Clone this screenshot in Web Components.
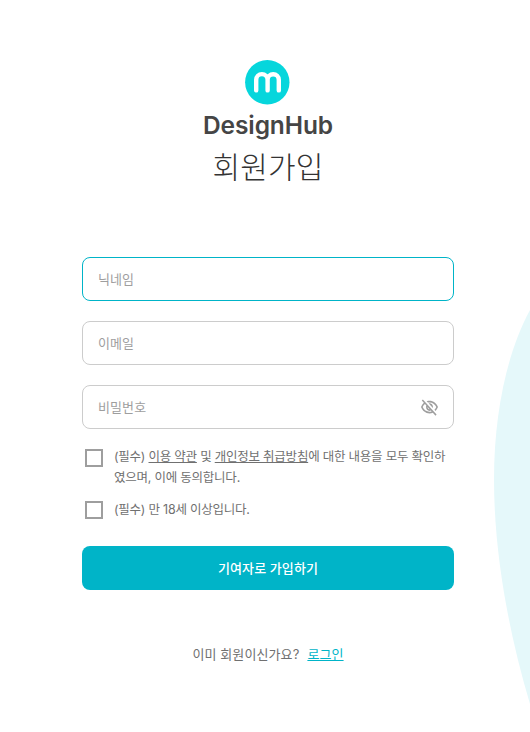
<!DOCTYPE html>
<html lang="ko">
<head>
<meta charset="UTF-8">
<title>DesignHub 회원가입</title>
<style>
  body {
    margin: 0;
    background: #fff;
    font-family: Inter, "Noto Sans CJK KR", "Noto Sans", sans-serif;
    font-size: 13px;
    letter-spacing: 0.1px;
    color: #707070;
  }
</style>
</head>
<body>
<signup-page>
  <brand-header slot="header" name="DesignHub">회원가입</brand-header>
  <text-field label="닉네임" active></text-field>
  <text-field label="이메일"></text-field>
  <text-field label="비밀번호" password></text-field>
  <agree-check style="margin-top: -4px"><span>(필수) <u>이용 약관</u> 및 <u>개인정보 취급방침</u>에 대한 내용을 모두 확인하<br>였으며, 이에 동의합니다.</span></agree-check>
  <agree-check style="margin-top: -11px; --text-top: 2px">(필수) 만 18세 이상입니다.</agree-check>
  <submit-button>기여자로 가입하기</submit-button>
  <login-prompt slot="footer" link="로그인">이미 회원이신가요?</login-prompt>
</signup-page>

<script>
class SignupPage extends HTMLElement {
    constructor() {
        super();
        this.attachShadow({ mode: 'open' });
        this.shadowRoot.innerHTML = `
      <style>
        :host {
          display: block;
          position: relative;
          box-sizing: border-box;
          width: 530px;
          height: 732px;
          padding: 60px 76px 0 82px;
          overflow: hidden;
        }

        .blob {
          position: absolute;
          top: 0;
          right: 0;
          width: 40px;
          height: 732px;
        }

        main {
          position: relative;
          display: flex;
          flex-direction: column;
        }

        form {
          display: flex;
          flex-direction: column;
          gap: 20px;
          height: 333px;
          margin: 0;
        }
      </style>

      <svg class="blob" viewBox="490 0 40 732">
        <path d="M530 310C507 352 494 414 494 479C494 552 508 630 530 704Z" fill="#e5f8fa"/>
      </svg>
      <main>
        <slot name="header"></slot>
        <form><slot></slot></form>
        <slot name="footer"></slot>
      </main>
    `;
    }
}

class BrandHeader extends HTMLElement {
    connectedCallback() {
        const name = this.getAttribute('name') || '';

        this.attachShadow({ mode: 'open' });
        this.shadowRoot.innerHTML = `
      <style>
        :host {
          display: flex;
          flex-direction: column;
          align-items: center;
          height: 197px;
        }

        svg {
          display: block;
          width: 45px;
          height: 45px;
          margin-right: 1px;
        }

        .name {
          height: 38px;
          font: 600 24.5px/40px Inter, sans-serif;
          letter-spacing: -0.1px;
          color: #454545;
          white-space: nowrap;
        }

        h1 {
          margin: 0;
          font-family: "Noto Sans CJK KR", sans-serif;
          font-size: 30px;
          font-weight: 300;
          line-height: 44px;
          color: #333;
        }
      </style>

      <svg viewBox="0 0 45 45" fill="none">
        <circle cx="22.3" cy="22.3" r="22.2" fill="#06d6dc"/>
        <path d="M11.2 30.4V19.8a5.7 5.7 0 0 1 11.4 0V30.4M22.6 19.8a5.6 5.6 0 0 1 11.2 0V30.4" stroke="#fff" stroke-width="4.4" stroke-linecap="round"/>
      </svg>
      <div class="name">${name}</div>
      <h1><slot></slot></h1>
    `;
    }
}

class TextField extends HTMLElement {
    connectedCallback() {
        const label = this.getAttribute('label') || '';
        const eye = this.hasAttribute('password') ? `
      <svg viewBox="1 2 22 20" preserveAspectRatio="none" fill="#9e9e9e">
        <path d="M12 6c3.79 0 7.17 2.13 8.82 5.5-.59 1.22-1.42 2.27-2.41 3.12l1.41 1.41c1.39-1.23 2.49-2.77 3.18-4.53C21.27 7.11 17 4 12 4c-1.27 0-2.49.2-3.64.57l1.65 1.65C10.66 6.09 11.32 6 12 6zm-1.07 1.14L13 9.21c.57.25 1.03.71 1.28 1.28l2.07 2.07c.08-.34.14-.7.14-1.07C16.5 9.01 14.48 7 12 7c-.37 0-.72.05-1.07.14zM2.01 3.87l2.68 2.68C3.06 7.83 1.77 9.53 1 11.5 2.73 15.89 7 19 12 19c1.52 0 2.98-.29 4.32-.82l3.42 3.42 1.41-1.41L3.42 2.45 2.01 3.87zm7.5 7.5l2.61 2.61c-.04.01-.08.02-.12.02-1.38 0-2.5-1.12-2.5-2.5 0-.05.01-.08.01-.13zm-3.4-3.4l1.75 1.75c-.23.55-.36 1.15-.36 1.78 0 2.48 2.02 4.5 4.5 4.5.63 0 1.23-.13 1.77-.36l.98.98c-.88.24-1.8.38-2.75.38-3.79 0-7.17-2.13-8.82-5.5.7-1.43 1.72-2.61 2.93-3.53z"/>
      </svg>` : '';

        this.attachShadow({ mode: 'open' });
        this.shadowRoot.innerHTML = `
      <style>
        :host {
          display: flex;
          align-items: center;
          justify-content: space-between;
          box-sizing: border-box;
          flex: none;
          height: 44px;
          padding: 0 15px;
          border: 1px solid #ccc;
          border-radius: 8px;
          background: #fff;
          color: #9e9e9e;
          line-height: 20px;
        }

        :host([active]) {
          border-color: #00b4c8;
        }

        svg {
          width: 17px;
          height: 17px;
        }
      </style>
      <span>${label}</span>${eye}
    `;
    }
}

class AgreeCheck extends HTMLElement {
    constructor() {
        super();
        this.attachShadow({ mode: 'open' });
        this.shadowRoot.innerHTML = `
      <style>
        :host {
          display: flex;
          gap: 11px;
          padding-left: 3px;
          font-size: 12.5px;
          letter-spacing: -0.23px;
          line-height: 21px;
          white-space: nowrap;
        }

        .box {
          box-sizing: border-box;
          flex: none;
          width: 18px;
          height: 18px;
          margin-top: 4px;
          border: 2px solid #9e9e9e;
        }

        .text {
          padding-top: var(--text-top, 1px);
        }
      </style>
      <div class="box"></div>
      <div class="text"><slot></slot></div>
    `;
    }
}

class SubmitButton extends HTMLElement {
    constructor() {
        super();
        this.attachShadow({ mode: 'open' });
        this.shadowRoot.innerHTML = `
      <style>
        :host {
          display: block;
          flex: none;
          margin-top: auto;
        }

        button {
          display: block;
          width: 100%;
          height: 44px;
          padding: 0;
          border: 0;
          border-radius: 8px;
          background: #00b4c8;
          color: #fff;
          font: inherit;
          font-weight: 500;
          letter-spacing: inherit;
          line-height: 20px;
        }
      </style>
      <button type="button"><slot></slot></button>
    `;
    }
}

class LoginPrompt extends HTMLElement {
    connectedCallback() {
        const link = this.getAttribute('link') || '';

        this.attachShadow({ mode: 'open' });
        this.shadowRoot.innerHTML = `
      <style>
        :host {
          display: flex;
          justify-content: center;
          gap: 8px;
          margin-top: 54px;
          line-height: 20px;
        }

        a {
          color: #00b4c8;
          text-decoration: underline;
        }
      </style>
      <span><slot></slot></span>
      <a href="#">${link}</a>
    `;
    }
}

customElements.define('signup-page', SignupPage);
customElements.define('brand-header', BrandHeader);
customElements.define('text-field', TextField);
customElements.define('agree-check', AgreeCheck);
customElements.define('submit-button', SubmitButton);
customElements.define('login-prompt', LoginPrompt);
</script>
</body>
</html>
